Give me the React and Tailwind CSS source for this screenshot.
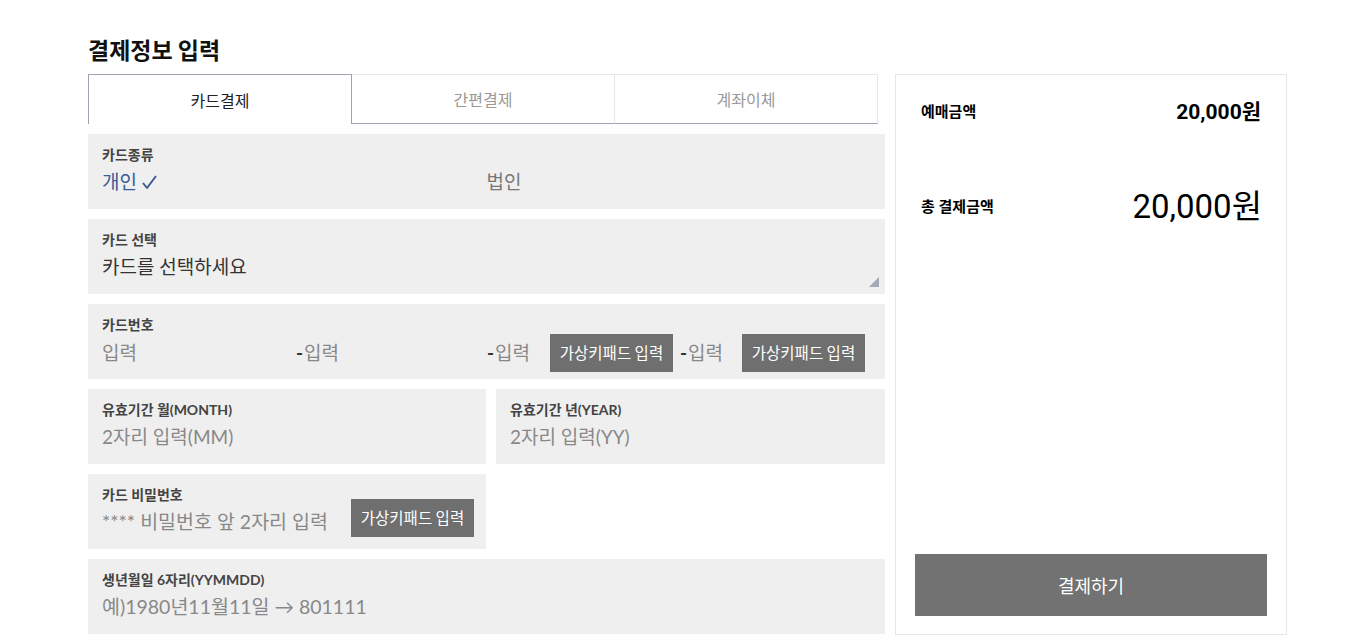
import React from 'react';

const sans = "font-['Lato','Noto_Sans_CJK_KR',sans-serif]";

function KeypadButton() {
  return (
    <button type="button" className="h-[38px] w-[123px] shrink-0 bg-[#6f6f6f] text-white text-[15.5px] font-['Noto_Sans_CJK_KR',sans-serif]">
      가상키패드 입력
    </button>
  );
}

function Dash() {
  return <span className="text-[#333] font-bold mr-[1px]">-</span>;
}

function Field({ label, children, className = '' }) {
  return (
    <div className={`bg-[#efefef] h-[75px] px-[14px] pt-[12px] ${className}`}>
      <div className="text-[14px] leading-[18px] font-bold text-[#444]">{label}</div>
      {children}
    </div>
  );
}

export default function App() {
  const tabs = ['카드결제', '간편결제', '계좌이체'];

  return (
    <div className={`min-h-screen bg-white ${sans}`}>
      <div className="pl-[88px] pt-[33px]">
        <h1 className="text-[23px] leading-[32px] font-bold text-[#111] mb-[9px] font-['Noto_Sans_CJK_KR',sans-serif]">
          결제정보 입력
        </h1>

        <div className="flex gap-[10px] items-start">
          {/* 왼쪽: 결제 입력 폼 */}
          <div className="w-[797px] flex flex-col gap-[10px]">
            <div className="flex w-[790px] h-[50px] font-['Noto_Sans_CJK_KR',sans-serif] text-[16px]">
              {tabs.map((t, i) =>
                i === 0 ? (
                  <div key={t} className="flex-1 flex items-center justify-center border border-b-0 border-[#9fa1ae] text-[#222]">
                    {t}
                  </div>
                ) : (
                  <div key={t} className="flex-1 flex items-center justify-center border-t border-r border-t-[#e6e6e6] border-r-[#e6e6e6] border-b border-b-[#9fa1ae] text-[#999]">
                    {t}
                  </div>
                )
              )}
            </div>

            <Field label="카드종류">
              <div className="grid grid-cols-2 mt-[4px] text-[19px] leading-[28px]">
                <div className="flex items-center gap-[4px] text-[#3b5a96]">
                  개인
                  <svg width="17" height="17" viewBox="0 0 17 17" className="mt-[1px]">
                    <polyline points="2,9 6,14 15,2" fill="none" stroke="#3b5a96" strokeWidth="2" strokeLinejoin="round" />
                  </svg>
                </div>
                <div className="text-[#777]">법인</div>
              </div>
            </Field>

            <Field label="카드 선택" className="relative">
              <div className="mt-[4px] text-[19px] leading-[28px] text-[#333]">카드를 선택하세요</div>
              <svg width="10" height="10" viewBox="0 0 10 10" className="absolute right-[6px] bottom-[7px]">
                <polygon points="10,0 10,10 0,10" fill="#a2a9b6" />
              </svg>
            </Field>

            <Field label="카드번호">
              <div className="flex items-center h-[38px] text-[19px] text-[#888]">
                <div className="w-[194px]">입력</div>
                <div className="w-[191px]"><Dash />입력</div>
                <div className="w-[63px]"><Dash />입력</div>
                <KeypadButton />
                <div className="w-[62px] ml-[7px]"><Dash />입력</div>
                <KeypadButton />
              </div>
            </Field>

            <div className="flex gap-[10px]">
              <Field label="유효기간 월(MONTH)" className="w-[398px]">
                <div className="mt-[4px] text-[19px] leading-[28px] text-[#888]">2자리 입력(MM)</div>
              </Field>
              <Field label="유효기간 년(YEAR)" className="flex-1">
                <div className="mt-[4px] text-[19px] leading-[28px] text-[#888]">2자리 입력(YY)</div>
              </Field>
            </div>

            <div className="w-[398px] h-[75px] bg-[#efefef] pl-[14px] pr-[12px] pt-[12px] flex items-start">
              <div className="w-[249px] shrink-0">
                <div className="text-[14px] leading-[18px] font-bold text-[#444]">카드 비밀번호</div>
                <div className="mt-[4px] text-[19.5px] leading-[28px] text-[#888] whitespace-nowrap">**** 비밀번호 앞 2자리 입력</div>
              </div>
              <div className="mt-[13px]">
                <KeypadButton />
              </div>
            </div>

            <Field label="생년월일 6자리(YYMMDD)">
              <div className="mt-[4px] text-[19.5px] leading-[28px] text-[#888]">예)1980년11월11일 → 801111</div>
            </Field>
          </div>

          {/* 오른쪽: 결제 금액 */}
          <div className="w-[392px] h-[561px] border border-[#e6e6e6] flex flex-col font-['Roboto','Noto_Sans_CJK_KR',sans-serif] text-black">
            <div className="flex items-center justify-between pl-[25px] pr-[25px] pt-[23px]">
              <span className="text-[15px] font-bold">예매금액</span>
              <span className="text-[21px] leading-[28px] font-bold">20,000원</span>
            </div>
            <div className="flex items-center justify-between pl-[25px] pr-[24px] mt-[61px]">
              <span className="text-[15px] font-bold">총 결제금액</span>
              <span className="text-[33px] leading-[40px]">20,000원</span>
            </div>
            <button type="button" className="mt-auto mx-[19px] mb-[18px] h-[62px] bg-[#727272] text-white text-[18px] font-['Noto_Sans_CJK_KR',sans-serif]">
              결제하기
            </button>
          </div>
        </div>
      </div>
    </div>
  );
}
